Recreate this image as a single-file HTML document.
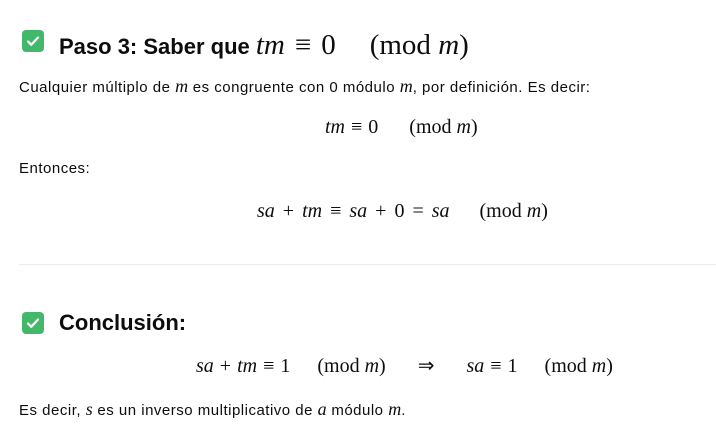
<!DOCTYPE html>
<html><head><meta charset="utf-8"><style>
body{margin:0;width:716px;height:437px;background:#fff;color:#0d0d0d;font-family:"Liberation Sans",sans-serif;position:relative;overflow:hidden}
.a{position:absolute;white-space:nowrap}
.p{font-size:15px;left:19px;letter-spacing:0.5px}
.h{font-size:22px;font-weight:bold;left:59px}
.m{font-family:"Liberation Serif",serif;font-size:20px}
i{font-family:"Liberation Serif",serif;font-style:italic}
.p i{font-size:18px;letter-spacing:0}
.o{margin:0 6px}
.q{display:inline-block;width:27px}
.box{position:absolute;left:22px;width:22px;height:22px;border-radius:4px;background:#43b86a}
.box svg{position:absolute;left:3px;top:3px}
hr{position:absolute;left:19px;right:0;top:264px;margin:0;border:0;border-top:1px solid #ececec}
</style></head><body>
<div class="box" style="top:30px"><svg width="16" height="16" viewBox="0 0 16 16"><path d="M3 8.5l3.3 3.3L13 4.5" fill="none" stroke="#fff" stroke-width="2.2" stroke-linecap="round" stroke-linejoin="round"/></svg></div>
<div class="a h" style="top:29px">Paso 3: Saber que <span class="m" style="font-size:29px;font-weight:normal"><i>tm</i><span class="o" style="margin:0 10px">≡</span>0<span style="display:inline-block;width:34px"></span>(mod <i>m</i>)</span></div>
<div class="a p" style="top:76px">Cualquier múltiplo de <i>m</i> es congruente con 0 módulo <i>m</i>, por definición. Es decir:</div>
<div class="a m" style="left:325px;top:116px"><i>tm</i><span class="o">≡</span>0<span class="q" style="width:31px"></span>(mod <i>m</i>)</div>
<div class="a p" style="top:160px">Entonces:</div>
<div class="a m" style="left:257px;top:200px"><i>sa</i><span class="o" style="margin:0 8px">+</span><i>tm</i><span class="o" style="margin:0 8px">≡</span><i>sa</i><span class="o" style="margin:0 8px">+</span>0<span class="o" style="margin:0 8px">=</span><i>sa</i><span class="q" style="width:30px"></span>(mod <i>m</i>)</div>
<hr>
<div class="box" style="top:312px"><svg width="16" height="16" viewBox="0 0 16 16"><path d="M3 8.5l3.3 3.3L13 4.5" fill="none" stroke="#fff" stroke-width="2.2" stroke-linecap="round" stroke-linejoin="round"/></svg></div>
<div class="a h" style="top:310px">Conclusión:</div>
<div class="a m" style="left:196px;top:353px"><i>sa</i><span class="o">+</span><i>tm</i><span class="o">≡</span>1<span class="q"></span>(mod <i>m</i>)<span class="q"></span><span style="margin:0 5px">⇒</span><span class="q"></span><i>sa</i><span class="o">≡</span>1<span class="q"></span>(mod <i>m</i>)</div>
<div class="a p" style="top:399px">Es decir, <i>s</i> es un inverso multiplicativo de <i>a</i> módulo <i>m</i>.</div>
</body></html>
